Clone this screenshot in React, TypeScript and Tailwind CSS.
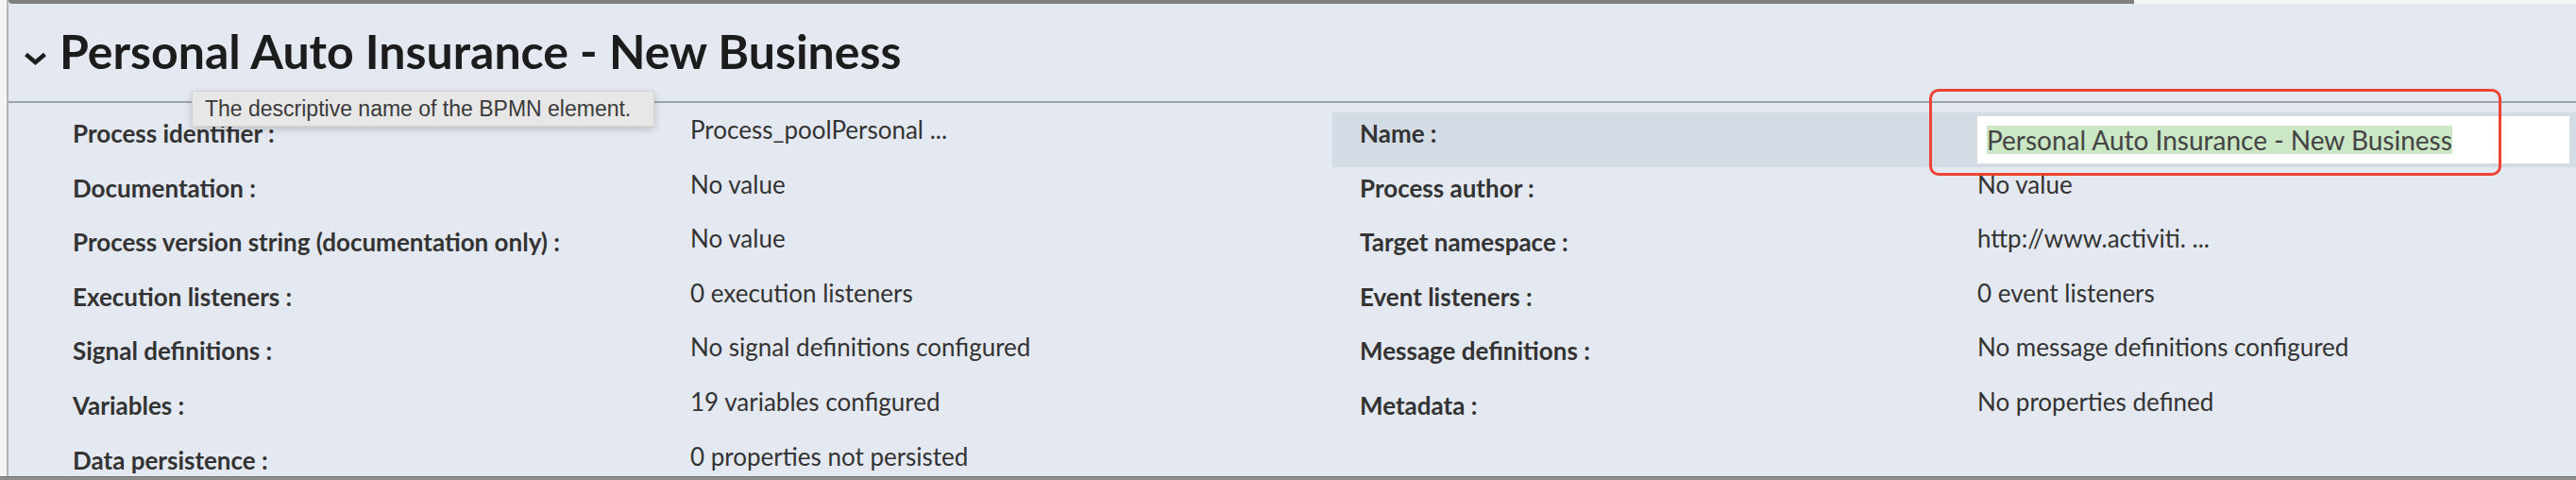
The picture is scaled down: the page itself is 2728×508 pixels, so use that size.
import React from "react";

type Row = {
  label: string;
  value: string;
  rightLabel?: string;
  rightValue?: string;
  highlight?: boolean;
};

const rows: Row[] = [
  { label: "Process identifier :", value: "Process_poolPersonal ...", rightLabel: "Name :", rightValue: "Personal Auto Insurance - New Business", highlight: true },
  { label: "Documentation :", value: "No value", rightLabel: "Process author :", rightValue: "No value" },
  { label: "Process version string (documentation only) :", value: "No value", rightLabel: "Target namespace :", rightValue: "http://www.activiti. ..." },
  { label: "Execution listeners :", value: "0 execution listeners", rightLabel: "Event listeners :", rightValue: "0 event listeners" },
  { label: "Signal definitions :", value: "No signal definitions configured", rightLabel: "Message definitions :", rightValue: "No message definitions configured" },
  { label: "Variables :", value: "19 variables configured", rightLabel: "Metadata :", rightValue: "No properties defined" },
  { label: "Data persistence :", value: "0 properties not persisted" },
];

function Chevron() {
  return (
    <svg width="25" height="14" viewBox="0 0 25 14" className="shrink-0 mt-[15px]">
      <path d="M2.5 2.5 L12.5 11 L22.5 2.5" fill="none" stroke="#1c1c1c" strokeWidth="4.5" strokeLinejoin="miter" />
    </svg>
  );
}

export default function App() {
  return (
    <div className="relative w-[2728px] h-[508px] flex flex-col overflow-hidden bg-[#f3f4f6] font-['Lato',sans-serif]">
      <div className="flex h-[504px]">
        {/* left gutter */}
        <div className="w-[7px] shrink-0 bg-[#f3f4f6]" />

        {/* properties panel */}
        <div className="flex-1 flex flex-col overflow-hidden border-l-2 border-[#b4b4b4] bg-[#e4e9f1]">
          <div className="flex h-[4px] shrink-0">
            <div className="w-[2251px] bg-[#7f7f7f] rounded-bl-[4px]" />
            <div className="flex-1 bg-[#f5f6f6]" />
          </div>

          <div className="h-[105px] shrink-0 pt-[20px] pl-[16px] border-b-2 border-[#9ca4ae]">
            <h1 className="flex items-center gap-[13px] text-[50px] leading-[60px] font-bold text-[#1c1c1c]">
              <Chevron />
              <span>Personal Auto Insurance - New Business</span>
            </h1>
          </div>

          <div className="pt-[10px] flex flex-col">
            {rows.map((row) => (
              <div key={row.label} className="flex h-[57.6px] shrink-0">
                <div className="w-[1402px] shrink-0 flex pl-[68px]">
                  <div className="w-[654px] shrink-0 pt-[7px] text-[26px] leading-[30px] font-bold text-[#333]">
                    {row.label}
                  </div>
                  <div className="flex-1 pt-[3px] text-[26px] leading-[30px] text-[#333]">{row.value}</div>
                </div>
                <div className={`flex-1 flex pl-[29px] ${row.highlight ? "bg-[#d3dbe4]" : ""}`}>
                  {row.rightLabel && (
                    <div className="w-[654px] shrink-0 pt-[7px] text-[26px] leading-[30px] font-bold text-[#333]">
                      {row.rightLabel}
                    </div>
                  )}
                  {row.highlight ? (
                    <div className="flex-1 mt-[4px] mr-[7px] h-[50px] bg-white flex items-center pl-[10px]">
                      <span className="h-[30px] leading-[30px] text-[28px] text-[#444] bg-[#cbe7c6]">
                        {row.rightValue}
                      </span>
                    </div>
                  ) : (
                    <div className="flex-1 pt-[3px] text-[26px] leading-[30px] text-[#333]">{row.rightValue}</div>
                  )}
                </div>
              </div>
            ))}
          </div>
        </div>
      </div>

      {/* bottom edge of the next panel */}
      <div className="h-[4px] shrink-0 bg-[#8f8f8f] border-t border-[#6f6f6f]" />

      {/* red annotation box */}
      <div className="absolute left-[2043px] top-[94px] w-[606px] h-[92px] border-[3px] border-[#ee4232] rounded-[10px]" />

      {/* tooltip */}
      <div className="absolute left-[203px] top-[96px] w-[490px] h-[38px] flex items-center pl-[13px] bg-[#e7e7e7] border border-[#d4d4d4] shadow-[0_3px_8px_rgba(0,0,0,0.18)] font-['Liberation_Sans',sans-serif] text-[23px] text-[#3a3a3a]">
        The descriptive name of the BPMN element.
      </div>
    </div>
  );
}
